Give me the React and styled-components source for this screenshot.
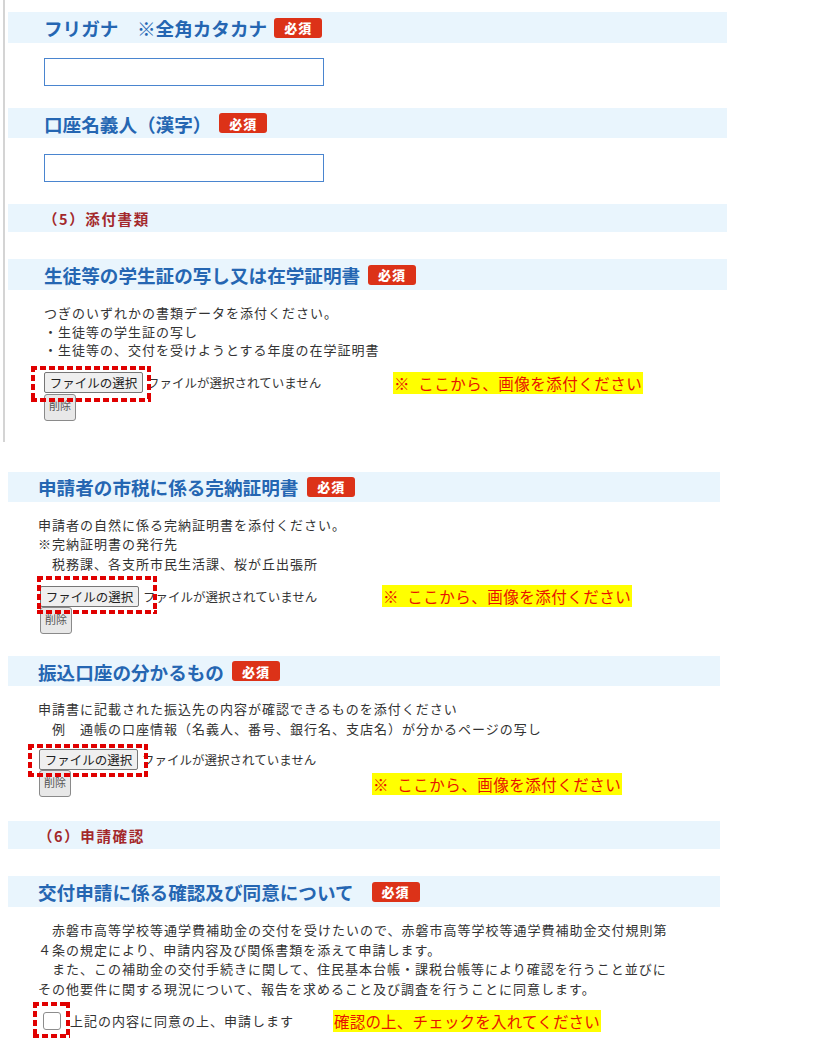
import React from "react";
import styled, { createGlobalStyle } from "styled-components";

const GlobalStyle = createGlobalStyle`
  body {
    margin: 0;
    background: #fff;
    font-family: "Noto Sans CJK JP", "Noto Sans", sans-serif;
    color: #333;
  }
`;

// ----- layout blocks -----
const Page = styled.div`
  width: 819px;
  padding-bottom: 20px;
`;

const Block = styled.div`
  margin-left: ${p => (p.$rule ? "3px" : "8px")};
  width: ${p => (p.$rule ? "719px" : "712px")};
  margin-top: ${p => p.$mt || 0}px;
  padding-top: ${p => p.$pt || 0}px;
  padding-bottom: ${p => p.$pb || 0}px;
  ${p => p.$rule && `
    border-left: 2px solid #d4d4d4;
    padding-left: 3px;
  `}
`;

const Bar = styled.div`
  display: flex;
  align-items: center;
  height: ${p => p.$h || 30}px;
  margin-top: ${p => p.$mt || 0}px;
  padding-left: ${p => p.$inset}px;
  background: #e9f5fd;
`;

const Heading = styled.h3`
  margin: 0;
  font-size: 18.6px;
  font-weight: 700;
  color: #2566b2;
  white-space: nowrap;
`;

const SubHeading = styled.h4`
  margin: 0;
  font-size: 14.5px;
  font-weight: 700;
  letter-spacing: 1.6px;
  color: #a3282b;
  margin-left: -7px;
`;

const Required = styled.span`
  display: inline-flex;
  align-items: center;
  justify-content: center;
  width: 48px;
  height: 20px;
  margin-left: ${p => p.$gap || 8}px;
  border-radius: 3px;
  background: #dc3218;
  color: #fff;
  font-size: 13px;
  font-weight: 900;
  letter-spacing: 1px;
`;

const TextBox = styled.input`
  display: block;
  box-sizing: border-box;
  width: 280px;
  height: 28px;
  margin-top: ${p => p.$mt}px;
  margin-left: ${p => p.$inset}px;
  border: 1px solid #4a85cf;
  border-radius: 0;
  padding: 2px 6px;
  font-size: 14px;
`;

const Body = styled.div`
  margin-top: ${p => p.$mt || 13}px;
  padding-left: ${p => p.$inset}px;
  font-size: 13px;
  letter-spacing: 1px;
  line-height: ${p => p.$lh || 19.5}px;
  color: #333;
  white-space: pre;
`;

// ----- file picker rows -----
const Row = styled.div`
  display: flex;
  align-items: ${p => p.$align || "center"};
  margin-top: ${p => p.$mt || 0}px;
  padding-left: ${p => p.$inset}px;
`;

const Picker = styled.div`
  position: relative;
  display: flex;
  align-items: center;
  width: ${p => p.$w}px;
  margin-left: ${p => p.$shift || 0}px;
`;

const ChooseButton = styled.button`
  box-sizing: border-box;
  height: 21px;
  width: 99px;
  padding: 0;
  border: 1px solid #767676;
  border-radius: 2px;
  background: #efefef;
  color: #222;
  font-family: inherit;
  font-size: 12.5px;
  line-height: 19px;
`;

const FileStatus = styled.span`
  margin-left: 4px;
  font-size: 12.5px;
  color: #333;
  white-space: nowrap;
`;

const RemoveButton = styled.button`
  box-sizing: border-box;
  width: 32px;
  height: 27px;
  margin-left: ${p => p.$shift || 0}px;
  padding: 0 0 4px;
  border: 1px solid #8a8a8a;
  border-radius: 3px;
  background: #e8e8e8;
  color: #555;
  font-family: inherit;
  font-size: 11px;
`;

// red square-dashed highlight laid over a control
const dash = "#e00000 0 6px, transparent 6px 9px";
const DashFrame = styled.span`
  position: absolute;
  left: ${p => p.$x}px;
  top: ${p => p.$y}px;
  width: ${p => p.$w}px;
  height: ${p => p.$h}px;
  pointer-events: none;
  background:
    repeating-linear-gradient(90deg, ${dash}) left top / 100% 4px no-repeat,
    repeating-linear-gradient(90deg, ${dash}) left bottom / 100% 4px no-repeat,
    repeating-linear-gradient(180deg, ${dash}) left top / 4px 100% no-repeat,
    repeating-linear-gradient(180deg, ${dash}) right top / 4px 100% no-repeat;
`;

const Note = styled.span`
  display: inline-block;
  margin-left: ${p => p.$ml || 0}px;
  margin-top: ${p => p.$mt || 0}px;
  padding: 0 1px;
  background: #ffff00;
  color: #e81300;
  font-size: 15.5px;
  letter-spacing: ${p => p.$ls || 0}px;
  line-height: 22px;
  white-space: pre;
`;

const CheckWrap = styled.label`
  position: relative;
  display: flex;
  align-items: center;
  margin-left: 5px;
  font-size: 13px;
  letter-spacing: 1px;
  color: #333;
  white-space: nowrap;
`;

const CheckBox = styled.input`
  appearance: none;
  box-sizing: border-box;
  width: 18px;
  height: 18px;
  margin: 0 9px 0 0;
  border: 1px solid #8d8d8d;
  border-radius: 3px;
  background: #fff;
`;

const NOTE = "※\u2002ここから、画像を添付ください";

function FileField({ width, shift, frame }) {
  return (
    <Picker $w={width} $shift={shift}>
      <ChooseButton type="button">ファイルの選択</ChooseButton>
      <FileStatus>ファイルが選択されていません</FileStatus>
      <DashFrame $x={frame[0]} $y={frame[1]} $w={frame[2]} $h={frame[3]} />
    </Picker>
  );
}

const studentText = [
  "つぎのいずれかの書類データを添付ください。",
  "・生徒等の学生証の写し",
  "・生徒等の、交付を受けようとする年度の在学証明書",
].join("\n");

const taxText = [
  "申請者の自然に係る完納証明書を添付ください。",
  "※完納証明書の発行先",
  "\u3000税務課、各支所市民生活課、桜が丘出張所",
].join("\n");

const bankText = [
  "申請書に記載された振込先の内容が確認できるものを添付ください",
  "\u3000例\u3000通帳の口座情報（名義人、番号、銀行名、支店名）が分かるページの写し",
].join("\n");

const consentText = [
  "\u3000赤磐市高等学校等通学費補助金の交付を受けたいので、赤磐市高等学校等通学費補助金交付規則第",
  "４条の規定により、申請内容及び関係書類を添えて申請します。",
  "\u3000また、この補助金の交付手続きに関して、住民基本台帳・課税台帳等により確認を行うこと並びに",
  "その他要件に関する現況について、報告を求めること及び調査を行うことに同意します。",
].join("\n");

export default function App() {
  return (
    <Page>
      <GlobalStyle />

      <Block $rule $pt={12} $pb={21}>
        <Bar $h={31} $inset={36}>
          <Heading>フリガナ　※全角カタカナ</Heading>
          <Required $gap={7}>必須</Required>
        </Bar>
        <TextBox $mt={15} $inset={36} />

        <Bar $h={30} $mt={22} $inset={36}>
          <Heading>口座名義人（漢字）</Heading>
          <Required>必須</Required>
        </Bar>
        <TextBox $mt={16} $inset={36} />

        <Bar $h={28} $mt={22} $inset={42}>
          <SubHeading>（5）添付書類</SubHeading>
        </Bar>

        <Bar $h={31} $mt={27} $inset={36}>
          <Heading>生徒等の学生証の写し又は在学証明書</Heading>
          <Required>必須</Required>
        </Bar>
        <Body $inset={36} $mt={14} $lh={18.5}>{studentText}</Body>
        <Row $inset={36} $mt={12}>
          <FileField width={349} frame={[-13, -6, 120, 36]} />
          <Note $ls={0.5}>{NOTE}</Note>
        </Row>
        <Row $inset={36}>
          <RemoveButton type="button">削除</RemoveButton>
        </Row>
      </Block>

      <Block $mt={30}>
        <Bar $h={30} $inset={30}>
          <Heading>申請者の市税に係る完納証明書</Heading>
          <Required $gap={9}>必須</Required>
        </Bar>
        <Body $inset={30}>{taxText}</Body>
        <Row $inset={30} $mt={12}>
          <FileField width={342} shift={2} frame={[-3, -10, 120, 38]} />
          <Note $ls={0.5}>{NOTE}</Note>
        </Row>
        <Row $inset={30}>
          <RemoveButton type="button" $shift={2}>削除</RemoveButton>
        </Row>

        <Bar $h={30} $mt={22} $inset={30}>
          <Heading>振込口座の分かるもの</Heading>
          <Required>必須</Required>
        </Bar>
        <Body $inset={30}>{bankText}</Body>
        <Row $inset={30} $mt={11}>
          <FileField width={300} shift={1} frame={[-11, -5, 120, 33]} />
        </Row>
        <Row $inset={30} $align="flex-start">
          <RemoveButton type="button" $shift={1}>削除</RemoveButton>
          <Note $ml={301} $mt={3} $ls={0.5}>{NOTE}</Note>
        </Row>

        <Bar $h={28} $mt={24} $inset={37}>
          <SubHeading>（6）申請確認</SubHeading>
        </Bar>

        <Bar $h={31} $mt={27} $inset={30}>
          <Heading>交付申請に係る確認及び同意について</Heading>
          <Required $gap={18}>必須</Required>
        </Bar>
        <Body $inset={30} $lh={19.7}>{consentText}</Body>
        <Row $inset={30} $mt={11}>
          <CheckWrap>
            <CheckBox type="checkbox" />
            上記の内容に同意の上、申請します
            <DashFrame $x={-10} $y={-9} $w={37} $h={36} />
          </CheckWrap>
          <Note $ml={39} $ls={0.2}>確認の上、チェックを入れてください</Note>
        </Row>
      </Block>
    </Page>
  );
}
